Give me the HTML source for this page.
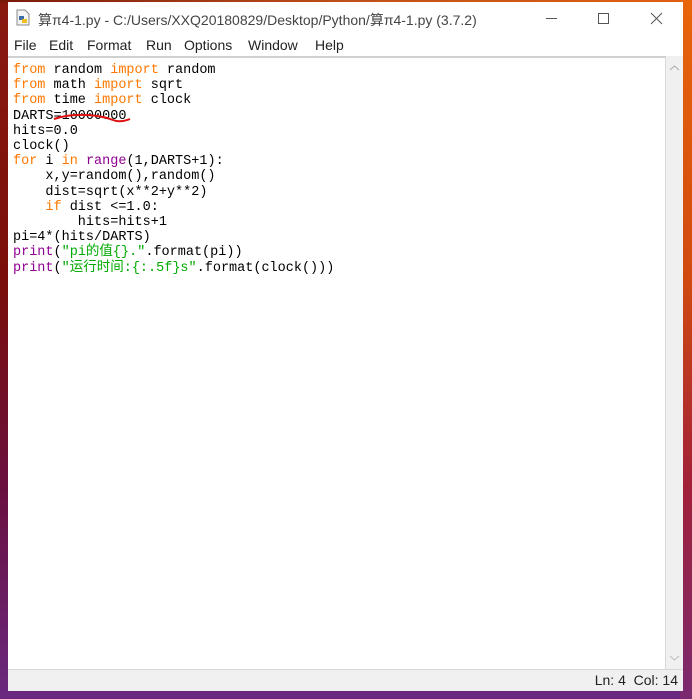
<!DOCTYPE html>
<html><head><meta charset="utf-8"><style>
html,body{margin:0;padding:0;}
body{width:692px;height:699px;position:relative;overflow:hidden;
background:linear-gradient(180deg,#8a1a10 0%,#7a0e0a 40%,#6a1040 70%,#6a2a80 100%);}
.bgr{position:absolute;right:0;top:0;width:12px;height:699px;background:linear-gradient(180deg,#e8650a 0%,#d04a10 40%,#a0203a 70%,#7a2a70 100%);}
.bgt{position:absolute;left:0;top:0;width:692px;height:3px;background:linear-gradient(90deg,#7a1a0a,#c0501a,#e06010);}
.win{position:absolute;left:8px;top:2px;width:675px;height:688px;background:#fff;}
.title{position:absolute;left:0;top:0;height:32px;width:675px;font:14px "Liberation Sans","Noto Sans CJK SC",sans-serif;color:#444;}
.title .t{position:absolute;left:30px;top:8px;white-space:nowrap;}
.icon{position:absolute;left:8px;top:7px;width:14px;height:17px;}
.menu{position:absolute;left:0;top:35px;height:20px;font:14px "Liberation Sans",sans-serif;color:#222;white-space:nowrap;}
.menu span{position:absolute;top:0;}
.edit{position:absolute;left:0;top:54px;width:657px;height:612px;border-top:2px solid #d0d0d0;border-right:1px solid #d8d8d8;background:#fff;}
.sb{position:absolute;left:658px;top:54px;width:17px;height:614px;background:#f0f0f0;}
.status{position:absolute;left:0;top:667px;width:675px;height:21px;background:#f0f0f0;border-top:1px solid #d8d8d8;font:14px "Liberation Sans",sans-serif;color:#222;}
pre{position:absolute;left:5px;top:5px;margin:0;font:13.5px/15.2px "Liberation Mono","Noto Sans CJK SC",monospace;color:#000;}
.k{color:#ff7700}.b{color:#900090}.s{color:#00aa00}
</style></head><body>
<div class="bgt"></div><div class="bgr"></div>
<div class="win">
 <div class="title">
  <svg class="icon" viewBox="0 0 14 17"><path d="M1 1h8l4 4v11H1z" fill="#f4f4f4" stroke="#888"/><rect x="3" y="7" width="5" height="4" fill="#3a6ea5"/><rect x="6" y="10" width="5" height="4" fill="#f0c020"/></svg>
  <span class="t">算π4-1.py - C:/Users/XXQ20180829/Desktop/Python/算π4-1.py (3.7.2)</span>
  <svg style="position:absolute;left:538px;top:10px" width="125" height="14"><line x1="0" y1="6.5" x2="11" y2="6.5" stroke="#555"/><rect x="52.5" y="1.5" width="10" height="10" fill="none" stroke="#555"/><path d="M105 1l11 11M116 1l-11 11" stroke="#555"/></svg>
 </div>
 <div class="menu"><span style="left:6px">File</span><span style="left:41px">Edit</span><span style="left:79px">Format</span><span style="left:138px">Run</span><span style="left:176px">Options</span><span style="left:240px">Window</span><span style="left:307px">Help</span></div>
 <div class="edit">
<pre><span class="k">from</span> random <span class="k">import</span> random
<span class="k">from</span> math <span class="k">import</span> sqrt
<span class="k">from</span> time <span class="k">import</span> clock
DARTS=10000000
hits=0.0
clock()
<span class="k">for</span> i <span class="k">in</span> <span class="b">range</span>(1,DARTS+1):
    x,y=random(),random()
    dist=sqrt(x**2+y**2)
    <span class="k">if</span> dist &lt;=1.0:
        hits=hits+1
pi=4*(hits/DARTS)
<span class="b">print</span>(<span class="s">"pi的值{}."</span>.format(pi))
<span class="b">print</span>(<span class="s">"运行时间:{:.5f}s"</span>.format(clock()))</pre>
  <svg style="position:absolute;left:40px;top:55px" width="100" height="12"><path d="M6 6 Q20 1 40 2 Q55 3 65 7 Q72 10 82 6" fill="none" stroke="#e01010" stroke-width="2"/></svg>
 </div>
 <div class="sb"><svg style="position:absolute;left:3px;top:8px" width="11" height="8"><path d="M1 6l4.5-4 4.5 4" fill="none" stroke="#aaa"/></svg><svg style="position:absolute;left:3px;top:598px" width="11" height="8"><path d="M1 2l4.5 4 4.5-4" fill="none" stroke="#bbb"/></svg></div>
 <div class="status"><span style="position:absolute;right:5px;top:2px">Ln: 4&nbsp;&nbsp;Col: 14</span></div>
</div>
</body></html>
